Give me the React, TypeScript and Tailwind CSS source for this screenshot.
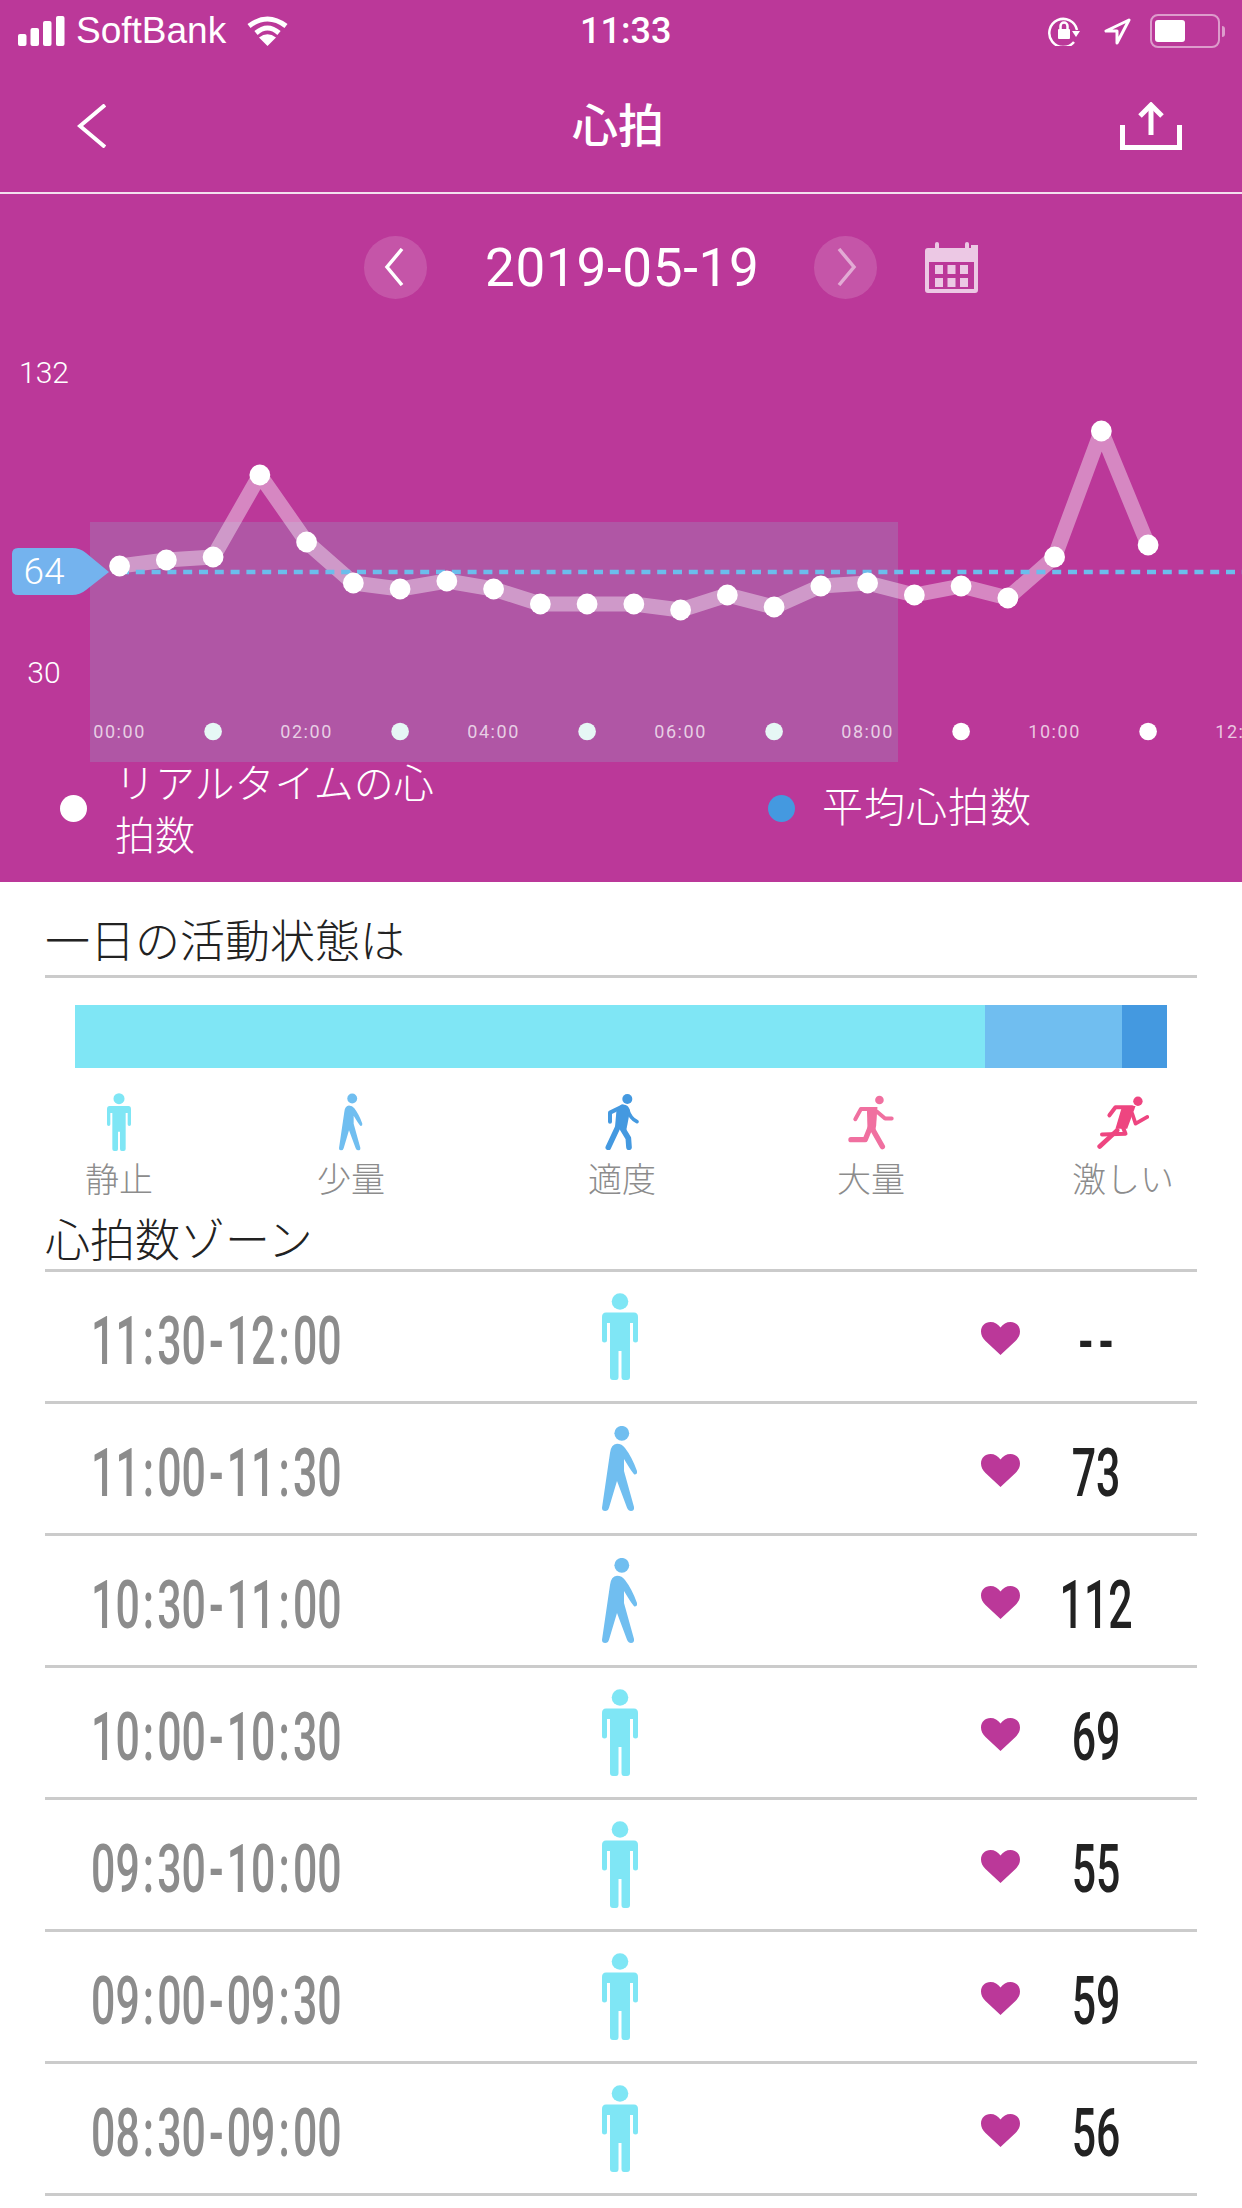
const sans = "font-['Liberation_Sans','Noto_Sans_CJK_JP',sans-serif]";

const points = [
  566, 560, 557, 475, 542, 583, 589, 581, 589, 604, 604, 604, 610, 595, 607, 586, 583, 595, 586, 598, 557, 431, 545,
];
const pointX = (i: number) => 119.6 + 46.75 * i;

const legendIcons = [
  { label: "静止", width: "w-[148px]", kind: "stand" },
  { label: "少量", width: "w-[316px]", kind: "walk" },
  { label: "適度", width: "w-[226px]", kind: "moderate" },
  { label: "大量", width: "w-[272px]", kind: "much" },
  { label: "激しい", width: "w-[232px]", kind: "hard" },
];

const rows = [
  { time: "11:30-12:00", walk: false, value: "--" },
  { time: "11:00-11:30", walk: true, value: "73" },
  { time: "10:30-11:00", walk: true, value: "112" },
  { time: "10:00-10:30", walk: false, value: "69" },
  { time: "09:30-10:00", walk: false, value: "55" },
  { time: "09:00-09:30", walk: false, value: "59" },
  { time: "08:30-09:00", walk: false, value: "56" },
];

function Stand({ className }: { className: string }) {
  return (
    <svg viewBox="0 0 36 87" className={className} fill="#7fe6f5">
      <circle cx="18" cy="8.5" r="8.3" />
      <path d="M4 19.5H32Q36 19.5 36 24V47Q36 49.5 33.5 49.5Q31 49.5 31 47V30H28V84Q28 87 25 87H22Q19.5 87 19.5 84V58H16.5V84Q16.5 87 14 87H11Q8 87 8 84V30H5V47Q5 49.5 2.5 49.5Q0 49.5 0 47V24Q0 19.5 4 19.5Z" />
    </svg>
  );
}

function Walk({ className }: { className: string }) {
  return (
    <svg viewBox="0 0 36 85" className={className} fill="#70bef0">
      <circle cx="19.8" cy="7.3" r="7.4" />
      <path d="M15 17.7Q20 17.7 23 22Q30 31 35 45Q35.5 48.5 32.5 48.5Q31 48 22 33V45L32 81Q32.5 85 29 85Q26.5 85 25 81.7L15 55L7 81.7Q6 85 3.2 85Q0 85 0 81.7L8 27Q9 18 15 17.7Z" />
    </svg>
  );
}

function Moderate() {
  return (
    <svg viewBox="70 12 105 168" className="w-[35px] h-[56px]" fill="none" stroke="#4499e0" strokeLinecap="round" strokeLinejoin="round">
      <circle cx="137" cy="27" r="15" fill="#4499e0" stroke="none" />
      <path d="M85 95V68L122 50" strokeWidth="12" />
      <path d="M118 44Q140 40 145 62L134 120L100 112L104 66Z" fill="#4499e0" stroke="none" />
      <path d="M139 62Q146 85 166 95" strokeWidth="11" />
      <path d="M120 112L140 145L142 172" strokeWidth="17" />
      <path d="M108 112L80 172" strokeWidth="17" />
    </svg>
  );
}

function Much() {
  return (
    <svg viewBox="80 40 145 170" className="w-[48px] h-[57px]" fill="none" stroke="#f070a0" strokeLinecap="round" strokeLinejoin="round">
      <circle cx="178" cy="57" r="13" fill="#f070a0" stroke="none" />
      <path d="M105 115L122 84H160" strokeWidth="12" />
      <path d="M140 78H172L168 135L165 150H142Z" fill="#f070a0" stroke="none" />
      <path d="M170 92L195 113H215" strokeWidth="12" />
      <path d="M157 145L187 198" strokeWidth="16" />
      <path d="M150 140L135 177H92" strokeWidth="16" />
    </svg>
  );
}

function Hard() {
  return (
    <svg viewBox="830 40 155 160" className="w-[52px] h-[54px]" fill="none" stroke="#ee4580" strokeLinecap="round" strokeLinejoin="round">
      <circle cx="952" cy="58" r="14" fill="#ee4580" stroke="none" />
      <path d="M867 100L885 76H935" strokeWidth="12" />
      <path d="M905 72H945L920 140H885Z" fill="#ee4580" stroke="none" />
      <path d="M935 95L945 125L980 105" strokeWidth="11" />
      <path d="M905 130L915 155L845 157" strokeWidth="12" />
      <path d="M890 145L838 193" strokeWidth="14" />
    </svg>
  );
}

function Heart() {
  return (
    <svg viewBox="0 0 39 33" className="w-[39px] h-[33px]" fill="#bb3899">
      <path d="M19.5 33L4.500 19C1.500 16 0 13 0 9.500C0 4 4 0 9.500 0C13.500 0 17 2 19.500 5.500C22 2 25.500 0 29.500 0C35 0 39 4 39 9.500C39 13 37.500 16 34.500 19Z" />
    </svg>
  );
}

function StatusBar() {
  return (
    <div className="flex h-[62px] items-center text-white">
      <svg viewBox="0 0 47 30" className="ml-[18px] w-[47px] h-[30px]" fill="#fff">
        <rect x="0" y="18" width="8.500" height="12" rx="2" />
        <rect x="12.500" y="12" width="8.500" height="18" rx="2" />
        <rect x="25" y="5" width="8.500" height="25" rx="2" />
        <rect x="38" y="0" width="8.500" height="30" rx="2" />
      </svg>
      <span className={`ml-[11px] w-[170px] text-[37px] leading-[62px] ${sans}`}>SoftBank</span>
      <svg viewBox="0 0 43 30" className="w-[43px] h-[30px]" fill="none" stroke="#fff" strokeWidth="5">
        <path d="M3 10Q21.500 -4 40 10" />
        <path d="M10 17Q21.500 7 33 17" />
        <path d="M21.500 30L13 21.500Q21.500 15 30 21.500Z" fill="#fff" stroke="none" />
      </svg>
      <span className="ml-[291px] w-[92px] whitespace-nowrap font-['Roboto',sans-serif] text-[36px] font-medium leading-[62px]">11:33</span>
      <svg viewBox="0 0 32 30" className="ml-[376px] w-[32px] h-[30px]" fill="none" stroke="#fff" strokeWidth="2.500">
        <path d="M26 26A14 14 0 1 1 29 14" />
        <path d="M24 15H32L28 21Z" fill="#fff" stroke="none" />
        <rect x="10" y="13" width="12" height="10" rx="1" fill="#fff" stroke="none" />
        <path d="M12.500 13V10A3.500 3.500 0 0 1 19.500 10V13" />
      </svg>
      <svg viewBox="0 0 28 27" className="ml-[23px] w-[28px] h-[27px]" fill="none" stroke="#fff" strokeWidth="3" strokeLinejoin="round">
        <path d="M26 2L3 13H14V25Z" />
      </svg>
      <div className="ml-[19px] flex items-center">
        <div className="flex h-[34px] w-[70px] items-center rounded-[8px] border-[2px] border-white/50 px-[3px]">
          <div className="h-[22px] w-[30px] rounded-[3px] bg-white" />
        </div>
        <div className="ml-[2px] h-[11px] w-[3px] rounded-r-full bg-white/50" />
      </div>
    </div>
  );
}

function NavBar() {
  return (
    <div className="flex h-[132px] items-center justify-between border-b-[2px] border-[#f3e0ee] pl-[77px] pr-[60px] pb-[2px]">
      <svg viewBox="0 0 29 44" className="w-[29px] h-[44px]" fill="none" stroke="#fff" strokeWidth="4">
        <path d="M28 1L3 22L28 43" />
      </svg>
      <span className={`ml-[10px] text-[46px] font-medium leading-[60px] text-white ${sans}`}>心拍</span>
      <svg viewBox="0 0 62 48" className="w-[62px] h-[48px]" fill="none" stroke="#fff" strokeWidth="5">
        <path d="M2.500 23V45.500H59.500V23" />
        <path d="M31 33V5" />
        <path d="M20 14L31 3L42 14" strokeWidth="5" />
      </svg>
    </div>
  );
}

function DateRow() {
  return (
    <div className="flex h-[146px] items-center pl-[364px]">
      <div className="flex h-[63px] w-[63px] items-center justify-center rounded-full bg-white/15">
        <svg viewBox="0 0 20 38" className="ml-[-3px] w-[20px] h-[38px]" fill="none" stroke="#fff" strokeWidth="3.500">
          <path d="M18 1L3 19L18 37" />
        </svg>
      </div>
      <span className="ml-[58px] mt-[2px] w-[279px] whitespace-nowrap font-['Roboto',sans-serif] text-[53px] leading-[60px] tracking-[0.7px] text-white">
        2019-05-19
      </span>
      <div className="ml-[50px] flex h-[63px] w-[63px] items-center justify-center rounded-full bg-white/15">
        <svg viewBox="0 0 20 38" className="ml-[3px] w-[20px] h-[38px]" fill="none" stroke="#fff" strokeOpacity="0.5" strokeWidth="3.500">
          <path d="M2 1L17 19L2 37" />
        </svg>
      </div>
      <svg viewBox="0 0 53 51" className="ml-[48px] w-[53px] h-[51px]" fill="#ecc8e4">
        <path fillRule="evenodd" d="M3 6H46V3H50H53V48Q53 51 50 51H3Q0 51 0 48V9Q0 6 3 6ZM4 20V47H49V20Z" />
        <rect x="10" y="0" width="4" height="12" rx="2" />
        <rect x="40" y="0" width="4" height="12" rx="2" />
        <rect x="10" y="23" width="8" height="9" /><rect x="22.500" y="23" width="8" height="9" /><rect x="35" y="23" width="8" height="9" />
        <rect x="10" y="36" width="8" height="9" /><rect x="22.500" y="36" width="8" height="9" /><rect x="35" y="36" width="8" height="9" />
      </svg>
    </div>
  );
}

function Chart() {
  const line = points.map((y, i) => `${pointX(i)},${y}`).join(" ");
  return (
    <svg viewBox="0 340 1242 422" className="block w-[1242px] h-[422px]">
      <rect x="90" y="522" width="808" height="240" fill="#b056a5" />
      <polyline points={line} fill="none" stroke="#fff" strokeOpacity="0.4" strokeWidth="15" strokeLinejoin="bevel" />
      <line x1="120" y1="572" x2="1242" y2="572" stroke="#6cbdec" strokeWidth="4.500" strokeDasharray="9 6.800" />
      <path d="M18 548H72Q80 548 86 553L109 572L86 590Q80 595 72 595H18Q12 595 12 589V554Q12 548 18 548Z" fill="#74b3ee" />
      {points.map((y, i) => (
        <circle key={i} cx={pointX(i)} cy={y} r="10.400" fill="#fff" />
      ))}
      {[2, 6, 10, 14, 18, 22].map((i) => (
        <circle key={i} cx={pointX(i)} cy="731.500" r="8.800" fill={i < 18 ? "#e6f7f5" : "#fff"} />
      ))}
      {["00:00", "02:00", "04:00", "06:00", "08:00", "10:00", "12:00"].map((t, i) => (
        <text key={t} x={pointX(i * 4)} y="738" textAnchor="middle" fontFamily="Roboto" fontSize="18" letterSpacing="1.600" fill="#fff" fillOpacity="0.72">
          {t}
        </text>
      ))}
      <text x="44" y="382.500" textAnchor="middle" fontFamily="Roboto" fontSize="30" fontWeight="300" fill="#fff">132</text>
      <text x="44" y="682.500" textAnchor="middle" fontFamily="Roboto" fontSize="30" fontWeight="300" fill="#fff">30</text>
      <text x="44" y="584" textAnchor="middle" fontFamily="Roboto" fontSize="37" fontWeight="300" fill="#fff">64</text>
    </svg>
  );
}

function Legend() {
  return (
    <div className={`flex h-[120px] leading-[52px] font-light text-white ${sans}`}>
      <div className="flex h-[96px] w-[728px] items-center pl-[60px] text-[40px]">
        <div className="h-[27px] w-[27px] rounded-full bg-white mb-[4px]" />
        <span className="ml-[28px] w-[335px]">リアルタイムの心拍数</span>
      </div>
      <div className="flex h-[96px] items-center pl-[40px] text-[41px]">
        <div className="h-[27px] w-[27px] rounded-full bg-[#4499e0] mb-[4px]" />
        <span className="ml-[27px] mb-[4px] tracking-[1px]">平均心拍数</span>
      </div>
    </div>
  );
}

function ActivityIcon({ kind }: { kind: string }) {
  if (kind === "stand") return <Stand className="w-[24px] h-[58px]" />;
  if (kind === "walk") return <Walk className="w-[24px] h-[58px]" />;
  if (kind === "moderate") return <Moderate />;
  if (kind === "much") return <Much />;
  return <Hard />;
}

// the app's condensed font is not installed, so Roboto is squeezed and the separators get air
function TimeText({ time }: { time: string }) {
  return (
    <span className="inline-block origin-left scale-x-[0.64] whitespace-nowrap font-['Roboto',sans-serif] text-[67px] font-medium leading-[80px] text-[#8c8c8c] translate-y-[4px]">
      {time.split("").map((c, i) =>
        /\d/.test(c) ? (
          <span key={i}>{c}</span>
        ) : (
          <span key={i} className="mx-[4.800px]">
            {c}
          </span>
        ),
      )}
    </span>
  );
}

function Row({ time, walk, value }: { time: string; walk: boolean; value: string }) {
  return (
    <div className="flex h-[132px] items-center border-b-[3px] border-[#cbcbcb]">
      <div className="w-[530px] pl-[46px]">
        <TimeText time={time} />
      </div>
      <div className="flex w-[90px] justify-center">
        {walk ? <Walk className="w-[36px] h-[85px]" /> : <Stand className="w-[36px] h-[87px]" />}
      </div>
      <div className="ml-[316px] translate-y-[2px]">
        <Heart />
      </div>
      <div className="flex w-[152px] justify-center">
        <span className={`inline-block scale-x-[0.64] whitespace-nowrap font-['Roboto',sans-serif] text-[67px] font-medium leading-[80px] text-[#222222] translate-y-[4px] ${value === "--" ? "ml-[6px] tracking-[9px]" : ""}`}>
          {value}
        </span>
      </div>
    </div>
  );
}

export default function App() {
  return (
    <div className={`h-[2208px] w-[1242px] overflow-hidden bg-white ${sans}`}>
      <div className="h-[882px] overflow-hidden bg-[#bb3899]">
        <StatusBar />
        <NavBar />
        <DateRow />
        <Chart />
        <Legend />
      </div>
      <div className="px-[45px] pt-[29px]">
        <h2 className="h-[67px] border-b-[3px] border-[#cbcbcb] text-[45px] font-light leading-[64px] text-[#222222]">一日の活動状態は</h2>
        <div className="mx-[30px] mt-[27px] flex h-[63px]">
          <div className="w-[910px] bg-[#7fe6f5]" />
          <div className="w-[137px] bg-[#70bef0]" />
          <div className="w-[45px] bg-[#4499e0]" />
        </div>
        <div className="mt-[25px] flex">
          {legendIcons.map((item) => (
            <div key={item.label} className={`flex shrink-0 flex-col items-center ${item.width}`}>
              <div className="flex h-[58px] items-center justify-center">
                <ActivityIcon kind={item.kind} />
              </div>
              <span className="mt-[7px] text-[34px] font-light leading-[44px] text-[#8c8c8c]">{item.label}</span>
            </div>
          ))}
        </div>
        <h2 className="mt-[13px] h-[57px] border-b-[3px] border-[#cbcbcb] text-[45px] font-light leading-[54px] text-[#222222]">心拍数ゾーン</h2>
        {rows.map((row) => (
          <Row key={row.time} time={row.time} walk={row.walk} value={row.value} />
        ))}
      </div>
    </div>
  );
}
